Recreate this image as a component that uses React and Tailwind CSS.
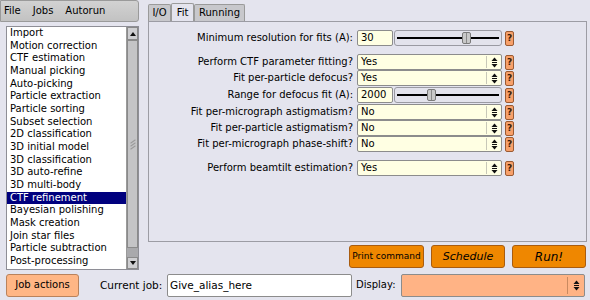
import React from "react";

const jobs = [
  "Import",
  "Motion correction",
  "CTF estimation",
  "Manual picking",
  "Auto-picking",
  "Particle extraction",
  "Particle sorting",
  "Subset selection",
  "2D classification",
  "3D initial model",
  "3D classification",
  "3D auto-refine",
  "3D multi-body",
  "CTF refinement",
  "Bayesian polishing",
  "Mask creation",
  "Join star files",
  "Particle subtraction",
  "Post-processing",
];

function ChoiceArrows() {
  return (
    <svg width="7" height="11" viewBox="0 0 7 11" className="shrink-0">
      <polygon points="0.5,4 3.5,0.5 6.5,4" fill="#111" />
      <rect x="1" y="5" width="5" height="1" fill="#111" />
      <polygon points="0.5,7 3.5,10.5 6.5,7" fill="#111" />
    </svg>
  );
}

function Help() {
  return (
    <div className="ml-[3px] w-[9px] h-[15px] rounded-[2px] border border-[#9a5a32] bg-[#f7a06a] flex items-center justify-center text-[9px] font-bold leading-none text-[#3a1d08]">
      ?
    </div>
  );
}

function Slider({ value, thumb }) {
  return (
    <div className="flex items-center h-[16px]">
      <div className="w-[36px] h-[16px] border border-[#8c8c8c] rounded-[2px] bg-[#ffffe3] flex items-center pl-[3px]">
        {value}
      </div>
      <div className="ml-[1px] w-[108px] h-[16px] border border-[#9a9aa2] rounded-[3px] bg-[#e3e3ec] flex items-center relative">
        <div className="mx-[2px] h-[2px] w-full bg-black" />
        <div
          className="absolute top-[1px] w-[9px] h-[12px] rounded-[2px] border border-[#7a7a7a] bg-[#c9c9c9] flex justify-center"
          style={{ left: thumb }}
        >
          <div className="w-[1px] h-full bg-[#8a8a8a]" />
        </div>
      </div>
      <Help />
    </div>
  );
}

function Choice({ value }) {
  return (
    <div className="flex items-center h-[16px]">
      <div className="w-[145px] h-[16px] border border-[#8c8c8c] rounded-[2px] bg-[#ffffe3] flex items-center">
        <span className="pl-[3px] flex-1">{value}</span>
        <div className="w-[1px] h-[12px] bg-[#c8c8b8]" />
        <div className="w-[14px] flex justify-center">
          <ChoiceArrows />
        </div>
      </div>
      <Help />
    </div>
  );
}

function Row({ label, children, className = "" }) {
  return (
    <div className={"flex items-center h-[16px] " + className}>
      <div className="w-[206px] text-right pr-[2px] whitespace-nowrap">{label}</div>
      <div className="ml-[2px]">{children}</div>
    </div>
  );
}

export default function App() {
  return (
    <div
      className="w-[590px] h-[300px] bg-[#e4e4ee] text-[10px] leading-none text-black overflow-hidden"
      style={{ fontFamily: '"DejaVu Sans", sans-serif' }}
    >
      <div className="flex h-[270px]">
        {/* left column */}
        <div className="w-[140px] flex flex-col">
          <div className="w-[139px] h-[22px] bg-gradient-to-b from-[#d2d2d2] to-[#c2c2c2] border border-[#9a9a9a] rounded-r-[3px] flex items-center gap-[12px] pl-[3px] text-[10px]">
            <span>File</span>
            <span>Jobs</span>
            <span>Autorun</span>
          </div>
          <div className="ml-[6px] mt-[4px] w-[133px] h-[244px] border border-[#8e8e96] bg-white flex">
            <div className="flex-1 pt-[0px] overflow-hidden">
              {jobs.map((j) => (
                <div
                  key={j}
                  className={
                    "h-[12.67px] leading-[12.67px] pl-[3px] whitespace-nowrap " +
                    (j === "CTF refinement" ? "bg-[#00007e] text-white" : "")
                  }
                >
                  {j}
                </div>
              ))}
            </div>
            <div className="w-[12px] bg-[#bdbdc0] border-l border-[#9a9a9a] flex flex-col">
              <div className="h-[13px] border border-[#8a8a8a] bg-[#cfcfd2] flex items-center justify-center">
                <svg width="6" height="4" viewBox="0 0 6 4">
                  <polygon points="0,4 3,0 6,4" fill="#111" />
                </svg>
              </div>
              <div className="h-[208px] border border-[#8a8a8a] bg-[#c4c4c6] flex flex-col items-center justify-center gap-[2px]">
                <div className="w-[6px] h-[1px] bg-[#9a9a9a] rotate-[-35deg]" />
                <div className="w-[6px] h-[1px] bg-[#9a9a9a] rotate-[-35deg]" />
                <div className="w-[6px] h-[1px] bg-[#9a9a9a] rotate-[-35deg]" />
              </div>
              <div className="flex-1 bg-[#a9a9ac]" />
              <div className="h-[12px] border border-[#8a8a8a] bg-[#cfcfd2] flex items-center justify-center">
                <svg width="6" height="4" viewBox="0 0 6 4">
                  <polygon points="0,0 3,4 6,0" fill="#111" />
                </svg>
              </div>
            </div>
          </div>
        </div>

        {/* right column */}
        <div className="ml-[8px] w-[439px] flex flex-col">
          <div className="pt-[3px] flex items-end h-[21px]">
            <div className="h-[17px] w-[23px] bg-[#c8c8cc] border border-[#9a9a9a] border-b-0 rounded-t-[2px] flex items-center justify-center">
              I/O
            </div>
            <div className="h-[18px] w-[23px] bg-[#e4e4ee] border border-[#9a9a9a] border-b-0 rounded-t-[2px] flex items-center justify-center">
              Fit
            </div>
            <div className="h-[17px] w-[51px] bg-[#c8c8cc] border border-[#9a9a9a] border-b-0 rounded-t-[2px] flex items-center justify-center">
              Running
            </div>
          </div>
          <div className="h-[221px] border border-[#9c9ca4] pt-[8px]">
            <Row label="Minimum resolution for fits (A):">
              <Slider value="30" thumb={67} />
            </Row>
            <Row label="Perform CTF parameter fitting?" className="mt-[8px]">
              <Choice value="Yes" />
            </Row>
            <Row label="Fit per-particle defocus?">
              <Choice value="Yes" />
            </Row>
            <Row label="Range for defocus fit (A):" className="mt-[1px]">
              <Slider value="2000" thumb={32} />
            </Row>
            <Row label="Fit per-micrograph astigmatism?" className="mt-[1px]">
              <Choice value="No" />
            </Row>
            <Row label="Fit per-particle astigmatism?">
              <Choice value="No" />
            </Row>
            <Row label="Fit per-micrograph phase-shift?">
              <Choice value="No" />
            </Row>
            <Row label="Perform beamtilt estimation?" className="mt-[8px]">
              <Choice value="Yes" />
            </Row>
          </div>
          <div className="mt-[3px] flex justify-end gap-[7px] pr-[1px]">
            <button className="w-[75px] h-[23px] bg-[#ef8700] border border-[#a85c10] rounded-[3px] text-[9px]">
              Print command
            </button>
            <button className="w-[74px] h-[23px] bg-[#ef8700] border border-[#a85c10] rounded-[3px] text-[11px] italic">
              Schedule
            </button>
            <button className="w-[74px] h-[23px] bg-[#ef8700] border border-[#a85c10] rounded-[3px] text-[12px] italic">
              Run!
            </button>
          </div>
        </div>
      </div>

      {/* bottom row */}
      <div className="mt-[3px] flex items-center h-[24px]">
        <button className="ml-[6px] w-[73px] h-[23px] bg-[#ffb685] border border-[#b9825c] rounded-[3px]">
          Job actions
        </button>
        <span className="ml-[21px] w-[63px] text-[10.5px] whitespace-nowrap">Current job:</span>
        <div className="ml-[4px] w-[185px] h-[23px] bg-white border border-[#8c8c8c] rounded-[2px] flex items-center pl-[2px] text-[10.5px]">
          Give_alias_here
        </div>
        <span className="ml-[4px] w-[41px] whitespace-nowrap">Display:</span>
        <div className="ml-[4px] w-[184px] h-[23px] bg-[#ffb385] border border-[#8c8c8c] rounded-[2px] flex items-center">
          <div className="flex-1" />
          <div className="w-[1px] h-[17px] bg-[#c98a60]" />
          <div className="w-[16px] flex justify-center">
            <ChoiceArrows />
          </div>
        </div>
      </div>
    </div>
  );
}
